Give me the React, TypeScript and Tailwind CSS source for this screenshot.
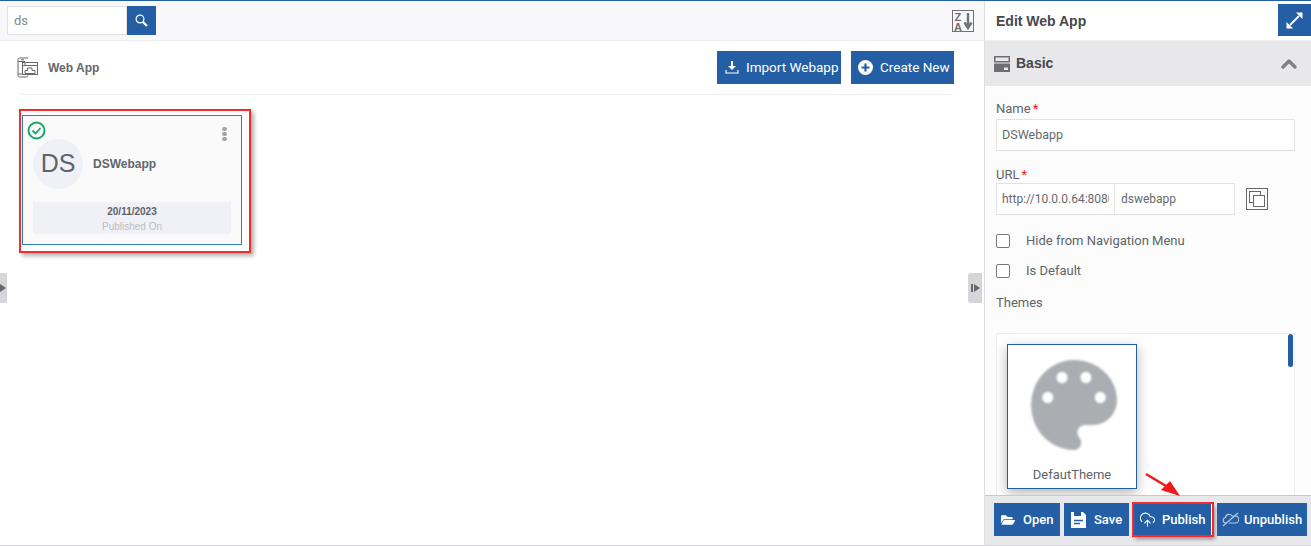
import React from 'react';
import { ChevronUp, CloudUpload } from 'lucide-react';
import { FaFolderOpen } from 'react-icons/fa';

const Arrow = () => (
  <svg className="absolute left-[1143px] top-[470px]" width="42" height="28" viewBox="0 0 42 28">
    <path d="M3 3 L23 15" stroke="#f01818" strokeWidth="2.4" fill="none" />
    <path d="M18 19 L27 10 L37 25 Z" fill="#f01818" />
  </svg>
);

const ActionButton = ({ icon, label, className }: { icon: React.ReactNode; label: string; className: string }) => (
  <button className={`h-[33px] bg-[#245fa6] text-white flex items-center text-[13px] font-medium whitespace-nowrap ${className}`}>
    {icon}
    {label}
  </button>
);

const Field = ({ value, className }: { value: string; className: string }) => (
  <input
    readOnly
    value={value}
    className={`h-[32px] border border-[#e2e2e4] bg-white px-[5px] text-[#666a70] outline-none ${className}`}
  />
);

const Check = ({ label }: { label: string }) => (
  <div className="flex items-center h-[14px]">
    <span className="w-[14px] h-[14px] rounded-[2px] border border-[#77797d] bg-white" />
    <span className="ml-[16px] text-[13px] text-[#60646a]">{label}</span>
  </div>
);

export default function App() {
  return (
    <div className="relative w-full h-[546px] overflow-hidden bg-white border-t border-b border-t-[#245fa6] border-b-[#d8d8da] flex font-['Roboto',sans-serif]">
      <main className="w-[984px] flex flex-col shrink-0">
        <div className="h-[40px] bg-[#f8f8fa] border-b border-[#eeeef0] flex items-center pl-[7px] pr-[10px] justify-between shrink-0">
          <div className="flex h-[29px]">
            <div className="w-[120px] border border-[#e2e2e4] bg-white flex items-center pl-[6px] text-[13px] text-[#85888d]">ds</div>
            <button className="w-[29px] bg-[#245fa6] flex items-center justify-center">
              <svg width="13" height="13" viewBox="0 0 13 13" fill="none" stroke="white">
                <circle cx="5" cy="5" r="3.9" strokeWidth="1.2" />
                <path d="M8 8 L12 12" strokeWidth="2.2" />
              </svg>
            </button>
          </div>
          <svg width="22" height="22" viewBox="0 0 22 22" fill="none">
            <rect x="0.5" y="0.5" width="21" height="21" stroke="#6f7175" />
            <text x="2.5" y="10.5" fontFamily="Liberation Sans" fontWeight="700" fontSize="11" fill="#6f7175">Z</text>
            <text x="2" y="20.5" fontFamily="Liberation Sans" fontWeight="700" fontSize="11" fill="#6f7175">A</text>
            <path d="M16 3 V17 M12.5 12.5 L16 18 L19.5 12.5" stroke="#6f7175" strokeWidth="2.4" />
          </svg>
        </div>

        <div className="pl-[17px] pr-[30px]">
          <div className="h-[54px] border-b border-[#ececee] rounded-b-[5px] flex items-center justify-between">
            <div className="flex items-center">
              <svg width="21" height="21" viewBox="0 0 21 21" fill="none" stroke="#66686d">
                <path d="M11 1 H2.5 Q1 1 1 2.5 V18.5 Q1 20 2.5 20 H9.5 Q11 20 11 18.5" />
                <path d="M1 4.5 H8 M1 17 H11 M4 2.8 H7" />
                <rect x="5.5" y="5.5" width="15" height="12" fill="white" />
                <path d="M5.5 8.5 H20.5 M7 7 H9" />
                <path d="M8 16.5 V13.5 H10.5 V11 H15 V13.5 H18 V16.5 Z" />
              </svg>
              <span className="ml-[10px] text-[12px] font-bold text-[#63666b] font-['Liberation_Sans',sans-serif]">Web App</span>
            </div>
            <div className="flex gap-[10px] -mt-[1px]">
              <button className="w-[124px] h-[33px] bg-[#245fa6] text-white text-[13.5px] whitespace-nowrap flex items-center pl-[8px]">
                <svg width="14" height="14" viewBox="0 0 14 14" fill="white" className="mr-[7px]">
                  <path d="M6 1 H8 V6 H11 L7 10 L3 6 H6 Z" />
                  <path d="M1 10 V13 H13 V10" fill="none" stroke="white" strokeWidth="1.1" />
                </svg>
                Import Webapp
              </button>
              <button className="w-[103px] h-[33px] bg-[#245fa6] text-white text-[13.5px] whitespace-nowrap flex items-center pl-[7px]">
                <svg width="15" height="15" viewBox="0 0 15 15" className="mr-[7px]">
                  <circle cx="7.5" cy="7.5" r="7.5" fill="white" />
                  <path d="M7.5 3.5 V11.5 M3.5 7.5 H11.5" stroke="#245fa6" strokeWidth="2.2" />
                </svg>
                Create New
              </button>
            </div>
          </div>
        </div>

        <div className="ml-[19px] mt-[14px] w-[232px] h-[144px] border-[2px] border-[#f52a2e] pt-[4px] pl-[1px] shadow-[3px_3px_4px_rgba(0,0,0,0.3)]">
          <div className="relative w-[220px] h-[130px] border border-[#2f7fc0] bg-[#fafafb] px-[10px]">
            <svg className="absolute left-[4px] top-[5px]" width="19" height="19" viewBox="0 0 19 19" fill="none">
              <circle cx="9.5" cy="9.5" r="8" stroke="#1ca36c" strokeWidth="2" />
              <path d="M5.5 9.5 L8.5 12.5 L13.5 7" stroke="#1ca36c" strokeWidth="1.8" />
            </svg>
            <div className="absolute right-[14px] top-[11px] flex flex-col gap-[1px]">
              <span className="w-[5px] h-[4px] rounded-full bg-[#a3a5a9]" />
              <span className="w-[5px] h-[4px] rounded-full bg-[#a3a5a9]" />
              <span className="w-[5px] h-[4px] rounded-full bg-[#a3a5a9]" />
            </div>
            <div className="flex items-center pt-[23px]">
              <div className="w-[50px] h-[50px] rounded-full bg-[#f0f1f7] flex items-center justify-center text-[25px] text-[#606368] font-['Liberation_Sans',sans-serif]">DS</div>
              <span className="ml-[10px] text-[12px] font-bold text-[#63666b] font-['Liberation_Sans',sans-serif]">DSWebapp</span>
            </div>
            <div className="mt-[13px] h-[32px] pt-[1px] bg-[#f0f1f7] flex flex-col items-center justify-center font-['Liberation_Sans',sans-serif]">
              <span className="text-[10px] font-bold text-[#5e6166] leading-[15px]">20/11/2023</span>
              <span className="text-[10px] text-[#bdbec2] leading-[15px]">Published On</span>
            </div>
          </div>
        </div>
      </main>

      <aside className="flex-1 border-l border-[#dedee0] flex flex-col bg-[#fcfcfc] min-w-0">
        <div className="h-[40px] bg-white flex items-start justify-between shrink-0 border-b border-[#eeeef0]">
          <span className="ml-[11px] mt-[12px] text-[14px] leading-[16px] font-bold text-[#46484c] font-['Liberation_Sans',sans-serif]">Edit Web App</span>
          <button className="w-[33px] h-[32px] mt-[3px] bg-[#245fa6] flex items-center justify-center">
            <svg width="17" height="17" viewBox="0 0 17 17" fill="white">
              <path d="M4 13 L13 4" stroke="white" strokeWidth="1.8" />
              <path d="M10 0.5 H16.5 V7 Z" />
              <path d="M7 16.5 H0.5 V10 Z" />
            </svg>
          </button>
        </div>
        <div className="h-[45px] bg-[#e8e8ea] flex items-center justify-between pl-[9px] pr-[10px] shrink-0">
          <div className="flex items-center">
            <svg width="16" height="16" viewBox="0 0 16 16" fill="#6d6f74">
              <rect x="0" y="0" width="16" height="6.5" />
              <rect x="0" y="7.5" width="16" height="8.5" />
              <rect x="1.5" y="1.5" width="13" height="3.5" fill="#e8e8ea" />
              <rect x="10" y="11.5" width="4" height="2.5" fill="#e8e8ea" />
            </svg>
            <span className="ml-[6px] text-[14px] font-bold text-[#46484c] font-['Liberation_Sans',sans-serif]">Basic</span>
          </div>
          <ChevronUp size={24} color="#808285" strokeWidth={3.5} />
        </div>

        <div className="flex-1 min-h-0 pl-[11px] pr-[16px] pt-[14px] text-[#60646a] text-[13px]">
          <div className="leading-[17px] h-[19px]">Name<span className="text-[#f01818] ml-[2px]">*</span></div>
          <Field value="DSWebapp" className="w-[299px] text-[12.5px] block pb-[2px]" />
          <div className="leading-[17px] mt-[15px] h-[17px]">URL<span className="text-[#f01818] ml-[2px]">*</span></div>
          <div className="flex items-center">
            <Field value="http://10.0.0.64:8080/" className="w-[119px] text-[12px]" />
            <Field value="dswebapp" className="w-[120px] text-[12px] border-l-0 pl-[6px]" />
            <svg className="ml-[11px]" width="22" height="22" viewBox="0 0 22 22" fill="none" stroke="#66686d">
              <rect x="0.5" y="0.5" width="21" height="21" />
              <rect x="3.5" y="3.5" width="11" height="11" />
              <rect x="7.5" y="7.5" width="11" height="11" fill="white" />
            </svg>
          </div>
          <div className="mt-[19px] flex flex-col gap-[16px]">
            <Check label="Hide from Navigation Menu" />
            <Check label="Is Default" />
          </div>
          <div className="mt-[16px] leading-[17px]">Themes</div>
          <div className="relative mt-[22px] h-[162px] w-[299px] border-t border-x border-[#eeeef0] bg-white overflow-hidden pl-[10px] pt-[10px]">
            <div className="w-[130px] h-[145px] border border-[#245fa6] bg-white shadow-[0_4px_12px_rgba(0,0,0,0.3)] flex flex-col items-center">
              <svg className="mt-[15px] ml-[4px] blur-[1px]" width="86" height="90" viewBox="3 3 18 18" preserveAspectRatio="none">
                <path fill="#aaadb1" d="M12 3a9 9 0 0 0 0 18c.83 0 1.5-.67 1.5-1.5 0-.39-.15-.74-.39-1.01-.23-.26-.38-.61-.38-.99 0-.83.67-1.5 1.5-1.5H16c2.76 0 5-2.24 5-5 0-4.42-4.03-8-9-8z" />
                <circle cx="6.5" cy="10.5" r="1.15" fill="white" />
                <circle cx="9.5" cy="6.5" r="1.15" fill="white" />
                <circle cx="14.5" cy="6.5" r="1.15" fill="white" />
                <circle cx="17.5" cy="10.5" r="1.15" fill="white" />
              </svg>
              <span className="mt-[16px] text-[13px] leading-[17px] text-[#60646a]">DefautTheme</span>
            </div>
            <span className="absolute right-[1px] top-[0px] w-[5px] h-[33px] rounded-full bg-[#245fa6]" />
          </div>
        </div>

        <div className="h-[50px] shrink-0 bg-[#e8e8ea] border-t border-[#c9c9cc] flex items-center pl-[9px] gap-[4px] pb-[2px]">
          <ActionButton className="w-[66px] pl-[7px]" label="Open" icon={<FaFolderOpen size={14} className="mr-[8px]" />} />
          <ActionButton
            className="w-[65px] pl-[7px]"
            label="Save"
            icon={
              <svg width="15" height="16" viewBox="0 0 15 16" className="mr-[8px]">
                <path fill="white" d="M0 0 H12 L15 3 V16 H0 Z" />
                <rect x="3" y="0" width="7" height="4" fill="#245fa6" />
                <path d="M3 8.5 H12 M3 11.5 H9" stroke="#245fa6" strokeWidth="1.5" />
              </svg>
            }
          />
          <ActionButton
            className="w-[80px] pl-[6px] border-r-[2px] border-r-white outline-[2px] outline-offset-[-1px] outline-[#f52a2e] shadow-[2px_3px_4px_rgba(0,0,0,0.4)]"
            label="Publish"
            icon={<CloudUpload size={17} strokeWidth={1.5} className="mr-[6px]" />}
          />
          <ActionButton
            className="w-[90px] pl-[5px]"
            label="Unpublish"
            icon={
              <svg width="17" height="17" viewBox="0 0 17 17" fill="none" stroke="#b9cbe2" strokeWidth="1.1" className="mr-[5px]">
                <path d="M5 12 H3.5 A2.8 2.8 0 0 1 3.5 6.5 A3.5 3.5 0 0 1 10 5 H13 A3.5 3.5 0 0 1 13.5 12 H7" />
                <path d="M1 15 L16 2" />
              </svg>
            }
          />
        </div>
      </aside>

      <div className="absolute left-0 top-[272px] w-[7px] h-[30px] bg-[#d6d6d8] flex items-center">
        <span className="w-0 h-0 border-y-[4px] border-y-transparent border-l-[6px] border-l-[#66686d]" />
      </div>
      <div className="absolute left-[968px] top-[272px] w-[14px] h-[30px] rounded-l-[3px] bg-[#d6d6d8] flex items-center pl-[3px]">
        <span className="w-[2px] h-[8px] bg-[#66686d] mr-[1px]" />
        <span className="w-0 h-0 border-y-[4px] border-y-transparent border-l-[6px] border-l-[#66686d]" />
      </div>
      <Arrow />
    </div>
  );
}
